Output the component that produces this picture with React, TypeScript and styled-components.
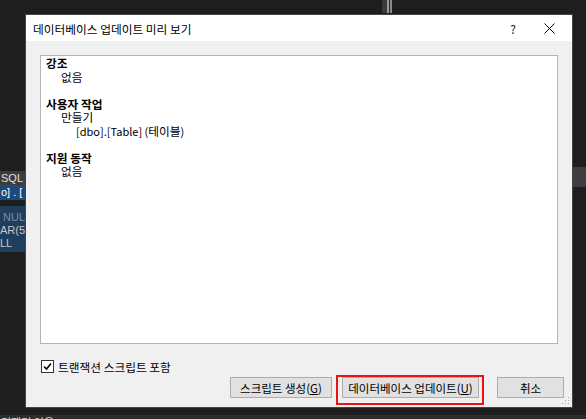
import React from "react";
import styled, { createGlobalStyle } from "styled-components";

const Global = createGlobalStyle`
  html, body { margin: 0; padding: 0; }
  body {
    width: 586px; height: 419px; overflow: hidden;
    background: #1e1e1e;
    font-family: "Noto Sans CJK KR", "Noto Sans", sans-serif;
  }
`;

const Desktop = styled.div`
  position: relative;
  width: 586px;
  height: 419px;
  overflow: hidden;
  background: #1e1e1e;
  display: flex;
  flex-direction: column;
`;

const TopStrip = styled.div`
  height: 13px;
  display: flex;
  padding-left: 382px;
`;

const Splitter = styled.div<{ $c: string; $w: number }>`
  width: ${(p) => p.$w}px;
  background: ${(p) => p.$c};
`;

const Middle = styled.div`
  flex: 1;
  display: flex;
  justify-content: space-between;
`;

const EditorEdge = styled.div`
  width: 25px;
  padding-top: 158px;
  display: flex;
  flex-direction: column;
  font-family: "Liberation Sans", "Noto Sans", sans-serif;
  font-size: 11px;
  overflow: hidden;
  white-space: nowrap;
`;

const EdgeRow = styled.div<{ $bg: string; $color: string; $h: number }>`
  height: ${(p) => p.$h}px;
  line-height: ${(p) => p.$h}px;
  background: ${(p) => p.$bg};
  color: ${(p) => p.$color};
  padding-left: 1px;
`;

const EdgeBlock = styled.div`
  margin-top: 6px;
  width: 25px;
  height: 46px;
  background: #1f3e5e;
  line-height: 13px;
  padding-top: 5px;
  box-sizing: border-box;
  color: #c8c8c8;
`;

const NullText = styled.div`
  color: #7a8ea6;
  padding-left: 3px;
`;

const RightEdge = styled.div`
  width: 13px;
  padding-top: 154px;
`;

const ScrollThumb = styled.div`
  height: 20px;
  background: #3e3e42;
`;

const StatusBar = styled.div`
  height: 4px;
  background: #2d2d30;
  font-size: 11px;
  color: #ddd;
  line-height: 14px;
  padding-left: 1px;
  overflow: hidden;
`;

const Dialog = styled.div`
  position: absolute;
  left: 25px;
  top: 14px;
  width: 548px;
  height: 394px;
  box-sizing: border-box;
  border: 1px solid #454545;
  background: #f0f0f0;
  display: flex;
  flex-direction: column;
  font-size: 11.5px;
  color: #000;
`;

const TitleBar = styled.div`
  height: 26px;
  background: #fff;
  display: flex;
  align-items: center;
  padding-left: 7px;
`;

const Title = styled.div`
  flex: 1;
  font-size: 11.7px;
  color: #000;
`;

const TitleButton = styled.div<{ $w: number }>`
  width: ${(p) => p.$w}px;
  height: 26px;
  display: flex;
  align-items: center;
  justify-content: center;
  font-size: 12px;
  color: #222;
`;

const Body = styled.div`
  flex: 1;
  padding: 14px 0 0 14px;
  display: flex;
  flex-direction: column;
  position: relative;
`;

const TextBox = styled.div`
  width: 518px;
  height: 289px;
  box-sizing: border-box;
  background: #fff;
  border: 1px solid #b4b4b4;
  padding: 0 0 0 5px;
  font-size: 11.7px;
  line-height: 13.5px;
`;

const Line = styled.div<{ $level: number; $bold?: boolean }>`
  padding-left: ${(p) => p.$level * 15}px;
  font-weight: ${(p) => (p.$bold ? 700 : 400)};
  height: 13.5px;
  white-space: pre;
`;

const Latin = styled.span`
  font-size: 11px;
`;

const CheckRow = styled.label`
  display: flex;
  align-items: center;
  margin-top: 16px;
  margin-left: 1px;
  gap: 4px;
  height: 13px;
  font-size: 11.7px;
`;

const CheckBox = styled.span`
  width: 13px;
  height: 13px;
  box-sizing: border-box;
  border: 1px solid #333;
  background: #fff;
  display: flex;
  align-items: center;
  justify-content: center;
`;

const ButtonRow = styled.div`
  display: flex;
  margin-top: 4px;
  padding-left: 190px;
`;

const Button = styled.div<{ $w: number; $ml: number }>`
  position: relative;
  width: ${(p) => p.$w}px;
  margin-left: ${(p) => p.$ml}px;
  height: 21px;
  box-sizing: border-box;
  background: #e1e1e1;
  border: 1px solid #adadad;
  display: flex;
  align-items: center;
  justify-content: center;
  font-size: 11.5px;
  white-space: nowrap;
`;

const Accel = styled.span`
  text-decoration: underline;
`;

const Highlight = styled.div`
  position: absolute;
  left: -7px;
  top: -3px;
  right: -6px;
  bottom: -8px;
  border: 2px solid #ee1111;
  pointer-events: none;
`;

const Grip = styled.svg`
  position: absolute;
  right: 2px;
  bottom: 2px;
`;

export default function App() {
  return (
    <>
      <Global />
      <Desktop>
        <TopStrip>
          <Splitter $c="#3a3a3a" $w={5} />
          <Splitter $c="#9a9a9a" $w={2} />
          <Splitter $c="#2a2a2a" $w={1} />
          <Splitter $c="#8a8a8a" $w={2} />
        </TopStrip>
        <Middle>
          <EditorEdge>
            <EdgeRow $bg="#3c3c3c" $color="#e0e0e0" $h={14}>SQL</EdgeRow>
            <EdgeRow $bg="#1c4a7c" $color="#ffffff" $h={15}>o] . [</EdgeRow>
            <EdgeBlock>
              <NullText>NULL</NullText>
              <div>AR(50</div>
              <div>LL</div>
            </EdgeBlock>
          </EditorEdge>
          <RightEdge>
            <ScrollThumb />
          </RightEdge>
        </Middle>
        <StatusBar>리팩터 있음</StatusBar>

        <Dialog>
          <TitleBar>
            <Title>데이터베이스 업데이트 미리 보기</Title>
            <TitleButton $w={28}>?</TitleButton>
            <TitleButton $w={45}>
              <svg width="11" height="11" viewBox="0 0 11 11">
                <path d="M0.5 0.5 L10.5 10.5 M10.5 0.5 L0.5 10.5" stroke="#000" strokeWidth="1" />
              </svg>
            </TitleButton>
          </TitleBar>
          <Body>
            <TextBox>
              <Line $level={0} $bold>강조</Line>
              <Line $level={1}>없음</Line>
              <Line $level={0}> </Line>
              <Line $level={0} $bold>사용자 작업</Line>
              <Line $level={1}>만들기</Line>
              <Line $level={2}>
                <Latin>[dbo].[Table] (</Latin>테이블<Latin>)</Latin>
              </Line>
              <Line $level={0}> </Line>
              <Line $level={0} $bold>지원 동작</Line>
              <Line $level={1}>없음</Line>
            </TextBox>
            <CheckRow>
              <CheckBox>
                <svg width="9" height="9" viewBox="0 0 9 9">
                  <path d="M1 4.5 L3.5 7 L8 1.5" fill="none" stroke="#000" strokeWidth="1.6" />
                </svg>
              </CheckBox>
              트랜잭션 스크립트 포함
            </CheckRow>
            <ButtonRow>
              <Button $w={102} $ml={0}>
                스크립트 생성(<Accel>G</Accel>)
              </Button>
              <Button $w={137} $ml={10}>
                데이터베이스 업데이트(<Accel>U</Accel>)
                <Highlight />
              </Button>
              <Button $w={67} $ml={18}>
                취소
              </Button>
            </ButtonRow>
            <Grip width="8" height="8" viewBox="0 0 8 8">
              <rect x="6" y="0" width="1" height="1" fill="#aaa" />
              <rect x="3" y="3" width="1" height="1" fill="#aaa" />
              <rect x="6" y="3" width="1" height="1" fill="#aaa" />
              <rect x="0" y="6" width="1" height="1" fill="#aaa" />
              <rect x="3" y="6" width="1" height="1" fill="#aaa" />
              <rect x="6" y="6" width="1" height="1" fill="#aaa" />
            </Grip>
          </Body>
        </Dialog>
      </Desktop>
    </>
  );
}
